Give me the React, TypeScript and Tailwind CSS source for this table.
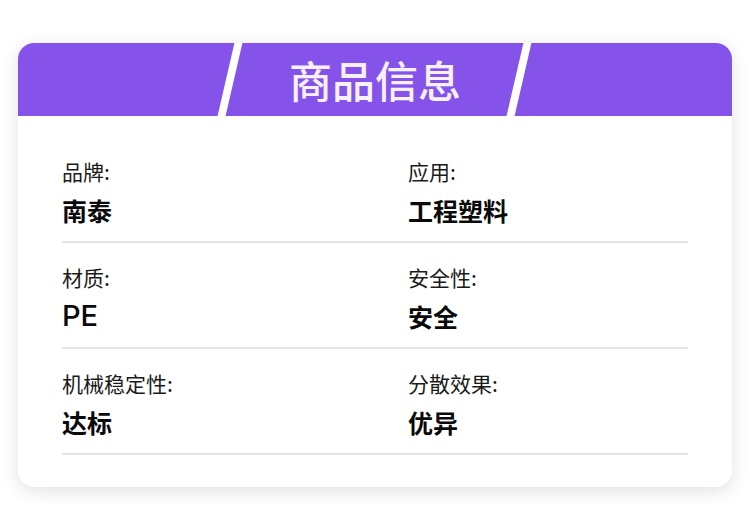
import React from "react";

const rows = [
	[
		{ label: "品牌:", value: "南泰" },
		{ label: "应用:", value: "工程塑料" },
	],
	[
		{ label: "材质:", value: "PE" },
		{ label: "安全性:", value: "安全" },
	],
	[
		{ label: "机械稳定性:", value: "达标" },
		{ label: "分散效果:", value: "优异" },
	],
];

const font = {
	fontFamily: '"Noto Sans CJK SC", "Noto Sans", sans-serif',
};

export default function App() {
	return (
		<div className="w-[750px] h-[530px] bg-white pt-[43px] px-[18px]" style={font}>
			<div className="w-[714px] rounded-[16px] bg-white shadow-[0_4px_18px_rgba(0,0,0,0.12)] overflow-hidden">
				{/* --- header --- */}
				<div className="relative h-[73px] bg-[#8653ea] flex items-center justify-center overflow-hidden">
					<div className="absolute top-[-4px] bottom-[-4px] left-[208px] w-[8px] bg-white -skew-x-[13deg]" />
					<div className="absolute top-[-4px] bottom-[-4px] left-[497px] w-[8px] bg-white -skew-x-[13deg]" />
					<h1 className="text-[43px] leading-none font-medium text-[#f7f0ff]">商品信息</h1>
				</div>

				{/* --- rows --- */}
				<div className="px-[44px] pt-[21px] pb-[32px]">
					{rows.map((row, i) => (
						<div
							key={i}
							className="grid grid-cols-[346px_1fr] pt-5 pb-[15px] border-b-2 border-[#e4e4e4]"
						>
							{row.map((c) => (
								<div key={c.label} className="flex flex-col">
									<span className="text-[21px] leading-[28px] text-[#1a1a1a]">{c.label}</span>
									{/[A-Za-z]/.test(c.value) ? (
										<span className="mt-[9px] text-[29px] leading-[32px] font-medium text-[#0a0a0a] font-['Inter',sans-serif]">
											{c.value}
										</span>
									) : (
										<span className="mt-[9px] text-[25px] leading-[32px] font-bold text-[#0a0a0a]">
											{c.value}
										</span>
									)}
								</div>
							))}
						</div>
					))}
				</div>
			</div>
		</div>
	);
}
